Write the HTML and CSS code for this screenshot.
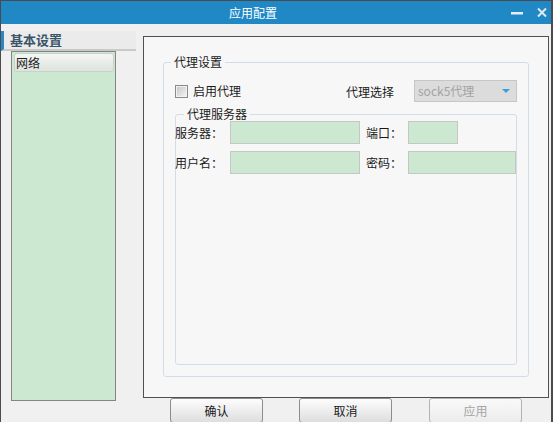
FILE: index.html
```html
<!DOCTYPE html>
<html lang="zh">
<head>
<meta charset="utf-8">
<title>应用配置</title>
<link rel="stylesheet" href="styles.css">
</head>
<body>
<div class="window">
  <div class="titlebar">
    <span class="title">应用配置</span>
    <div class="controls">
      <svg class="btn-min" width="12" height="23" viewBox="0 0 12 23"><rect x="0" y="11" width="12" height="2.5" fill="#e6eef4"/></svg>
      <svg class="btn-close" width="10" height="23" viewBox="0 0 10 23"><path d="M1 7.5 L9 15.5 M9 7.5 L1 15.5" stroke="#dfe8ef" stroke-width="2"/></svg>
    </div>
  </div>
  <div class="body">
    <aside class="sidebar">
      <div class="side-head">基本设置</div>
      <div class="side-list">
        <div class="side-item">网络</div>
      </div>
    </aside>
    <main class="content">
      <div class="panel">
        <fieldset class="group outer">
          <legend class="legend-outer">代理设置</legend>
          <div class="row1">
            <label class="check"><span class="box"></span>启用代理</label>
            <span class="sel-label">代理选择</span>
            <div class="combo">
              <span class="combo-text">sock5代理</span>
              <svg class="combo-arrow" width="8" height="4" viewBox="0 0 8 4"><path d="M0 0 H8 L4 4 Z" fill="#3a9ee2"/></svg>
            </div>
          </div>
          <fieldset class="group inner">
            <legend class="legend-inner">代理服务器</legend>
            <div class="form-grid">
              <span class="flabel">服务器：</span>
              <div class="field"></div>
              <span class="flabel second">端口：</span>
              <div class="field short"></div>
              <span class="flabel">用户名：</span>
              <div class="field"></div>
              <span class="flabel second">密码：</span>
              <div class="field wide"></div>
            </div>
          </fieldset>
        </fieldset>
      </div>
      <div class="buttons">
        <button class="btn">确认</button>
        <button class="btn">取消</button>
        <button class="btn disabled">应用</button>
      </div>
    </main>
  </div>
</div>
</body>
</html>
```
FILE: styles.css
```css
* { box-sizing: border-box; }
html, body {
  margin: 0;
  padding: 0;
  width: 553px;
  height: 422px;
  overflow: hidden;
  background: #f0f0f0;
}
body {
  font-family: "Noto Sans CJK SC", "Noto Sans", sans-serif;
  font-size: 12px;
  color: #1a1a1a;
}
.window {
  width: 553px;
  height: 422px;
  border-top: 1px solid #4b4b4b;
  border-left: 1px solid #4b4b4b;
  border-right: 2px solid #4b4b4b;
  background: #f0f0f0;
  overflow: hidden;
}
.titlebar {
  height: 23px;
  background: #2188c6;
  display: flex;
  align-items: center;
  color: #fff;
}
.title {
  margin-left: 228px;
  font-size: 12px;
  line-height: 14px;
}
.controls {
  margin-left: auto;
  display: flex;
  align-items: center;
  gap: 14px;
  padding-right: 4px;
}
.controls svg { display: block; }

.body {
  display: flex;
  align-items: flex-start;
}
.sidebar {
  width: 135px;
  margin-top: 7px;
}
.side-head {
  height: 20px;
  border-left: 3px solid #2a86c4;
  border-bottom: 2px solid #c9c9c9;
  background: #ebebeb;
  padding-left: 6px;
  font-weight: bold;
  font-size: 13px;
  line-height: 18px;
  color: #3a5468;
}
.side-list {
  margin-left: 10px;
  width: 105px;
  height: 350px;
  border: 1px solid #858585;
  background: #cde8d0;
  padding: 1px 1px 0 2px;
}
.side-item {
  height: 19px;
  border: 1px solid #c9d2c9;
  border-radius: 3px;
  background: linear-gradient(#f5f7f5, #dde3dd);
  padding-left: 1px;
  line-height: 17px;
  color: #222;
}

.content {
  margin-left: 7px;
  margin-top: 12px;
  width: 406px;
}
.panel {
  height: 362px;
  border: 1px solid #505050;
  background: #f7f7f7;
  padding: 18px 19px 0 19px;
}
.group {
  margin: 0;
  border: 1px solid #d3dde8;
  border-radius: 3px;
  min-width: 0;
}
.group legend {
  padding: 0 3px;
  font-size: 12px;
  line-height: 14px;
  color: #1a1a1a;
}
.outer {
  padding: 11px 11px 11px 11px;
}
.legend-outer { margin-left: -4px; }
.row1 {
  display: flex;
  align-items: center;
  height: 22px;
}
.check {
  display: flex;
  align-items: center;
  gap: 5px;
  line-height: 14px;
}
.box {
  width: 13px;
  height: 13px;
  border: 1px solid #8a8a8a;
  background: linear-gradient(135deg, #c4c4c4, #f6f6f6);
  box-shadow: inset 0 0 0 1px #f2f2f2;
}
.sel-label {
  margin-left: auto;
  margin-right: 20px;
}
.combo {
  width: 103px;
  height: 22px;
  border: 1px solid #c6c6c6;
  background: #dcdcdc;
  display: flex;
  align-items: center;
  padding: 0 6px 0 3px;
}
.combo-text {
  color: #a3a3a3;
  line-height: 14px;
}
.combo-arrow {
  display: block;
  margin-left: auto;
}
.inner {
  margin-top: 5px;
  padding: 0;
}
.legend-inner { margin-left: 8px; }
.form-grid {
  height: 243px;
  display: grid;
  grid-template-columns: 54px 130px 48px 1fr;
  grid-auto-rows: 23px;
  row-gap: 7px;
  align-content: start;
  align-items: center;
}
.flabel {
  margin-left: -1px;
  line-height: 14px;
}
.flabel.second {
  margin-left: 6px;
}
.field {
  height: 23px;
  border: 1px solid #c6c6c6;
  background: #cde8d0;
}
.field.short { width: 50px; }

.buttons {
  display: flex;
  padding-left: 27px;
  gap: 36px;
}
.btn {
  width: 93px;
  height: 25px;
  border: 1px solid #8c8c8c;
  border-radius: 3px;
  background: linear-gradient(#fdfdfd, #dedede);
  font-family: "Noto Sans CJK SC", "Noto Sans", sans-serif;
  font-size: 12px;
  color: #1a1a1a;
  padding: 0;
  line-height: 14px;
}
.btn.disabled {
  margin-left: 1px;
  border-color: #b2b2b2;
  background: linear-gradient(#f9f9f9, #ececec);
  color: #a4a4a4;
}
```
